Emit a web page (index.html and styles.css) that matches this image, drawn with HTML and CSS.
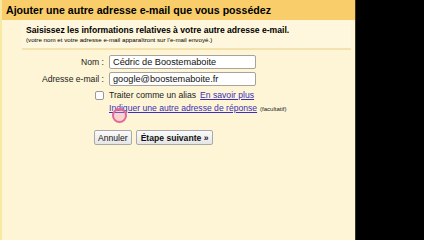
FILE: index.html
```html
<!DOCTYPE html>
<html lang="fr">
<head>
  <meta charset="UTF-8" />
  <meta name="viewport" content="width=device-width, initial-scale=1.0"/>
  <title>Ajouter une autre adresse e-mail</title>
  <link rel="stylesheet" href="styles.css">
</head>
<body>
  <div class="popup">
    <h1 class="popup-title">Ajouter une autre adresse e-mail que vous possédez</h1>

    <div class="intro">
      <p class="intro-main">Saisissez les informations relatives à votre autre adresse e-mail.</p>
      <p class="intro-note">(votre nom et votre adresse e-mail apparaîtront sur l'e-mail envoyé.)</p>
    </div>

    <div class="form">
      <label class="field-label" for="name">Nom :</label>
      <input type="text" id="name" class="field-input" value="Cédric de Boostemaboite" />

      <label class="field-label" for="email">Adresse e-mail :</label>
      <input type="text" id="email" class="field-input" value="google@boostemaboite.fr" />

      <input type="checkbox" id="alias" class="alias-box" />
      <div class="alias-row">
        <label for="alias">Traiter comme un alias</label>
        <a href="#" class="link">En savoir plus</a>
      </div>

      <span></span>
      <div class="reply-row">
        <a href="#" class="link">Indiquer une autre adresse de réponse</a>
        <span class="optional">(facultatif)</span>
        <span class="cursor-ring"></span>
      </div>
    </div>

    <div class="actions">
      <button class="btn">Annuler</button>
      <button class="btn btn-strong">Étape suivante »</button>
    </div>
  </div>
</body>
</html>
```

FILE: styles.css
```css
body {
  margin: 0;
  background: #000;
  font-family: "Liberation Sans", Arial, sans-serif;
  color: #000;
}

.popup {
  width: 356px;
  height: 240px;
  background: #fdf5d6;
  border-right: 1px solid #3a3320;
  border-left: 2px solid #f7e9a0;
  box-sizing: border-box;
}

.popup-title {
  margin: 0;
  height: 20px;
  padding: 4px 0 0 4px;
  box-sizing: border-box;
  background: #f8cd6a;
  font-size: 10.6px;
  font-weight: bold;
}

.intro {
  margin: 0 4px 0 20px;
  padding: 5px 0 5px 4px;
  border-bottom: 2px solid #f3e2ad;
  background: #fef7dd;
}

.intro p {
  margin: 0;
}

.intro-main {
  font-size: 8.6px;
  font-weight: bold;
  line-height: 11px;
}

.intro-note {
  margin-top: 1px;
  font-size: 6.2px;
}

.form {
  display: grid;
  grid-template-columns: 102px auto;
  column-gap: 5px;
  row-gap: 3px;
  align-items: center;
  margin-top: 5px;
  font-size: 8.6px;
}

.field-label {
  justify-self: end;
  color: #222;
}

.field-input {
  width: 147px;
  height: 14px;
  box-sizing: border-box;
  padding: 0 3px;
  border: 1px solid #a7a39a;
  border-radius: 2px;
  background: #fff;
  font: 9.2px "Liberation Sans", Arial, sans-serif;
  color: #111;
}

.alias-box {
  justify-self: end;
  width: 9px;
  height: 9px;
  margin: 1px 0 0 0;
  appearance: none;
  border: 1px solid #999;
  border-radius: 2px;
  background: #fff;
}

.alias-row,
.reply-row {
  display: flex;
  gap: 4px;
  align-items: baseline;
  color: #222;
}

.alias-row {
  padding-top: 1px;
}

.reply-row {
  position: relative;
  gap: 3px;
}

.link {
  color: #3a2fb8;
  text-decoration: underline;
}

.optional {
  font-size: 6px;
}

.cursor-ring {
  position: absolute;
  left: 3px;
  top: 5px;
  width: 11px;
  height: 11px;
  border: 2px solid #e2679a;
  border-radius: 50%;
  background: rgba(240, 150, 190, 0.35);
}

.actions {
  display: flex;
  gap: 4px;
  margin: 17px 0 0 92px;
}

.btn {
  height: 15px;
  padding: 0 3px;
  border: 1px solid #a9a9a9;
  border-radius: 2px;
  background: linear-gradient(#fafafa, #e6e6e6);
  font: 8.6px "Liberation Sans", Arial, sans-serif;
  color: #111;
}

.btn-strong {
  font-weight: bold;
  padding: 0 4px;
}
```
